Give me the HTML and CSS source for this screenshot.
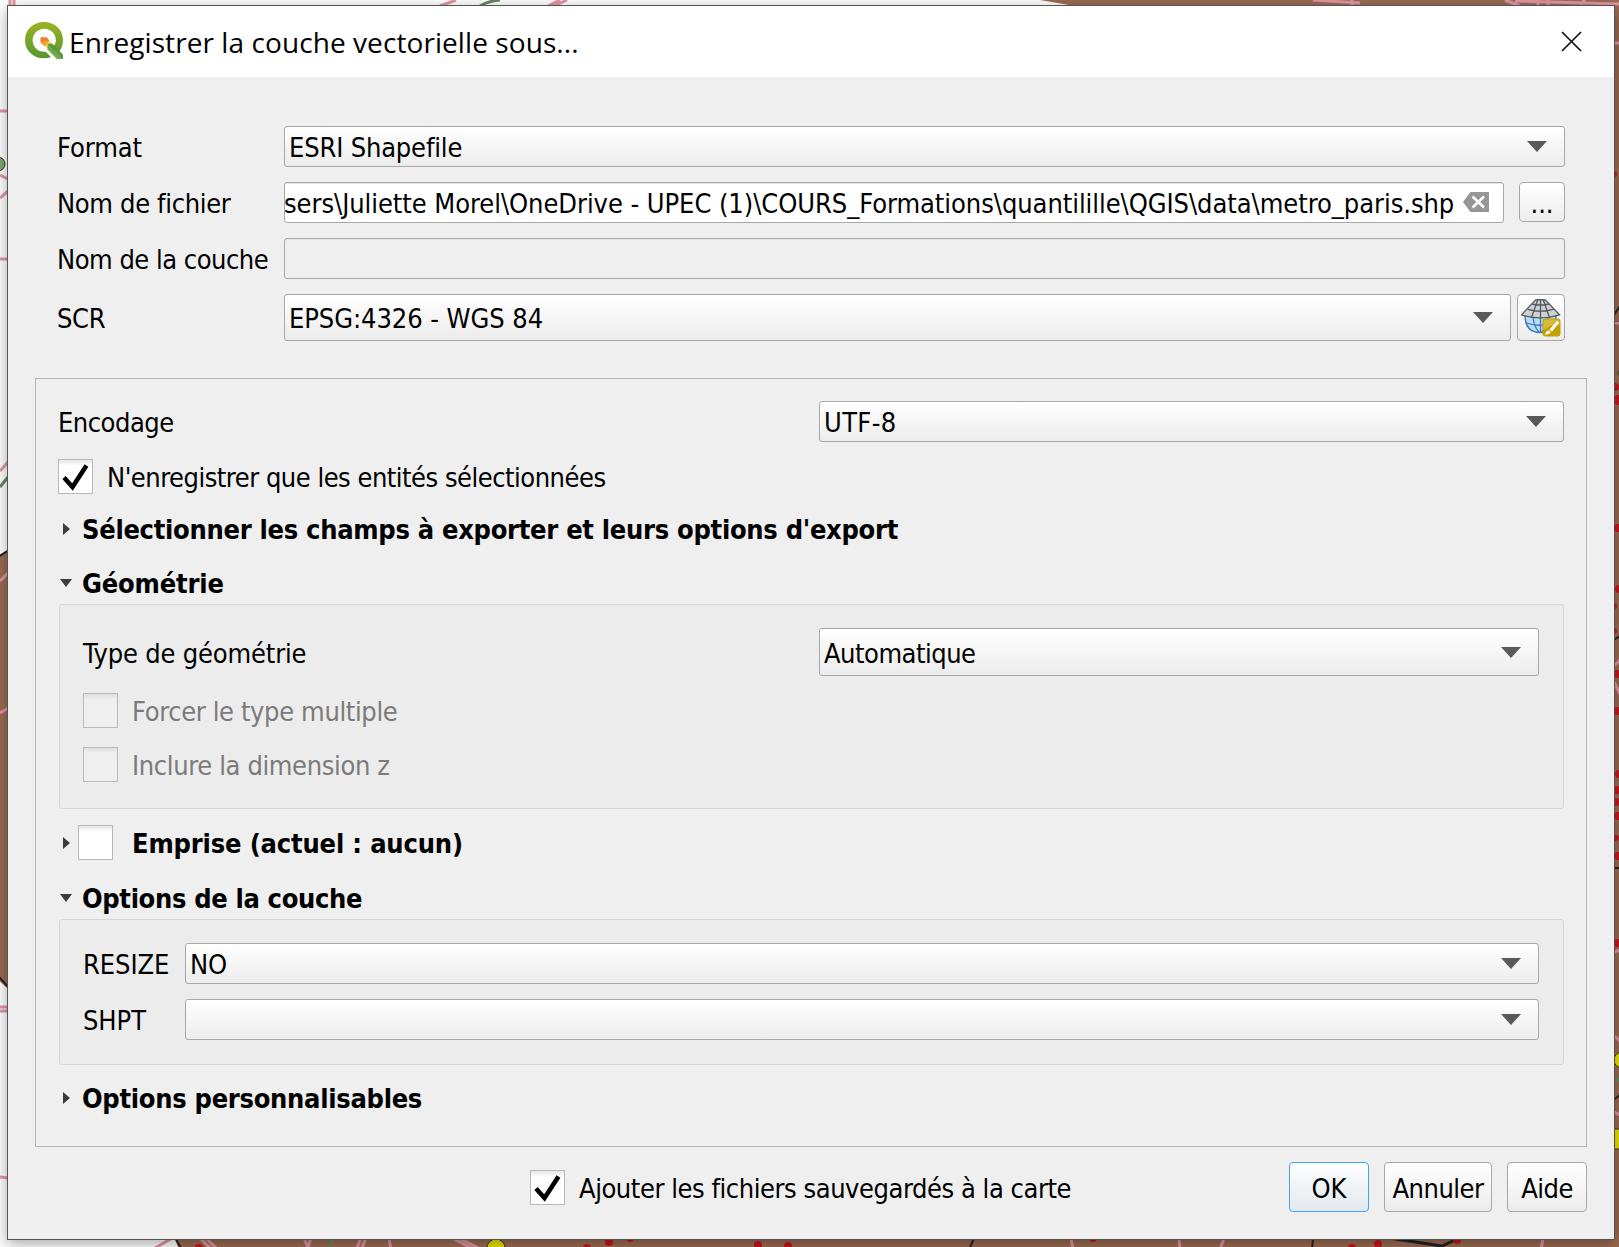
FILE: index.html
```html
<!DOCTYPE html>
<html lang="fr">
<head>
<meta charset="utf-8">
<title>Enregistrer la couche vectorielle sous...</title>
<link rel="stylesheet" href="styles.css">
</head>
<body>
<svg class="map" viewBox="0 0 1619 1247" aria-hidden="true">
  <path fill="#9c6b53" d="M1040 0 1030 8H1619V1247H178L174 1236 60 1030 7 988-6 976V558L8 551 500 500 1030 8 1040 0H1619V100Z"/>
  <g fill="none" stroke="#222" stroke-width="2">
    <path d="M-2 557 9 550M-1 977 9 988M174 1236 182 1250M974 1238 969 1250M1313 1238 1312 1250M1612 318 1620 306M1612 322H1620M1612 641 1620 636M1612 868H1620M1612 1101 1620 1095"/>
    <path stroke-width="3" d="M1389 1238 1442 1246 1457 1239"/>
  </g>
  <g fill="none" stroke="#e295a3" stroke-width="3">
    <path d="M10 0V6M14 0V6M0 111H8M0 175 8 179M0 198 8 191M0 259H8M0 471 8 462M0 581 8 573M0 713 8 708M0 1007H8M0 1011H8M0 1177 8 1178M440 6 456 0M548 6 560 0M554 6 567 0M1313 0 1360 3M1352 0V6M1505 0 1520 6M1515 1 1619 4M1538 0V6M1548 0V6M1580 5 1585 0M1612 43H1620M1612 323H1620M1612 668 1620 660M1612 678 1620 694M1612 953 1620 950M1612 1034 1620 1041M1612 1111 1620 1115M152 1250 172 1238M200 1238 212 1250M206 1238 218 1250M304 1238 309 1250M311 1238 307 1250M356 1250 361 1238M361 1250 366 1238M389 1238 391 1250M452 1238 475 1250M459 1238 482 1250M1071 1238 1073 1250M1179 1238 1180 1250M1220 1250 1224 1238M1541 1250 1543 1238"/>
  </g>
  <g fill="none" stroke="#64895f" stroke-width="3">
    <path d="M480 6Q488 1 500 0M0 487 8 477M328 1250 333 1238M1612 1074 1620 1081"/>
  </g>
  <circle cx="-2" cy="164" r="7" fill="#7cac68" stroke="#333"/>
  <g fill="#c8161d">
    <circle cx="199" cy="1248" r="4"/><circle cx="587" cy="1248" r="4"/><circle cx="609" cy="1242" r="4"/><circle cx="630" cy="1238" r="4"/><circle cx="758" cy="1245" r="4"/><circle cx="788" cy="1246" r="4"/><circle cx="1093" cy="1238" r="4"/><circle cx="1352" cy="1248" r="4"/><circle cx="1378" cy="1244" r="4"/><circle cx="1457" cy="1240" r="4"/>
    <circle cx="1614" cy="174" r="3"/><circle cx="1615" cy="387" r="4"/><circle cx="1618" cy="400" r="5"/><circle cx="1618" cy="528" r="4"/><circle cx="1619" cy="589" r="4"/><circle cx="1614" cy="606" r="3"/><circle cx="1614" cy="631" r="3"/><circle cx="1617" cy="674" r="4"/><circle cx="1617" cy="711" r="4"/><circle cx="1619" cy="774" r="4"/><circle cx="1617" cy="790" r="4"/><circle cx="1616" cy="802" r="4"/><circle cx="1618" cy="816" r="4"/><circle cx="1616" cy="838" r="3"/><circle cx="1618" cy="856" r="4"/><circle cx="1617" cy="943" r="4"/>
  </g>
  <g fill="#e9e500" stroke="#333">
    <circle cx="496" cy="1248" r="9"/><circle cx="1622" cy="1060" r="8"/><path d="M1612 1129H1624V1149H1612Z"/><circle cx="1621" cy="373" r="3"/>
  </g>
</svg>

<div class="dialog">
  <header class="titlebar">
    <svg class="logo" width="39" height="38" viewBox="0 0 39 38">
      <defs>
        <linearGradient id="ring" x1="0" y1="0" x2="0" y2="1"><stop offset="0" stop-color="#9ab423"/><stop offset="1" stop-color="#57962f"/></linearGradient>
      </defs>
      <path fill="url(#ring)" fill-rule="evenodd" d="M19 0C30 0 38 7.800 38 18.200 38 23 36.300 27 34 29.800L28.500 24.200C30 22.500 30.900 20.500 30.900 18.200 30.900 11.700 25.700 6.700 19.300 6.700 12.800 6.700 7.600 11.700 7.600 18.200 7.600 24.800 12.800 29.800 19.300 29.800L20.700 29.700 26 35C24 35.800 21.700 36.200 19 36.200 8 36.200 0 28.500 0 18.200 0 7.800 8 0 19 0Z"/>
      <path fill="#ee7f2d" d="M15.500 15.200H21.500L24.400 18.500 20 24.500 15.500 20.500Z"/>
      <path fill="#f2a13a" d="M15.500 20.500 21.500 18.500 24 19.500 20 24.300Z"/>
      <path fill="#f7e64b" d="M24 19.200 27.200 19.800 26.500 23 22.800 27 20 24.300Z"/>
      <path fill="#5a9a3c" d="M22.700 21.800H27.400L38 32.500V37H32L22.700 27.500Z"/>
      <path fill="#81b455" d="M22.700 27.500V22L37.800 37H32Z" opacity=".65"/>
    </svg>
    <h1 class="title">Enregistrer la couche vectorielle sous...</h1>
    <svg class="close" width="21" height="21" viewBox="0 0 21 21"><path d="M1 1 20 20M20 1 1 20" stroke="#111" stroke-width="1.700" fill="none"/></svg>
  </header>

  <section class="form">
    <div class="row">
      <span class="text label even">Format</span>
      <div class="combo grow"><span class="text snug">ESRI Shapefile</span><i class="arrow"></i></div>
    </div>
    <div class="row">
      <span class="text label">Nom de fichier</span>
      <div class="field grow path"><span class="text even">sers\Juliette Morel\OneDrive - UPEC (1)\COURS_Formations\quantilille\QGIS\data\metro_paris.shp</span>
        <svg class="clear" width="26" height="20" viewBox="0 0 26 20"><path fill="#969696" d="M0 10 7.500 0H26V20H7.500Z"/><path d="M9.500 4.500 21 15.500M21 4.500 9.500 15.500" stroke="#fff" stroke-width="2.600"/></svg>
      </div>
      <button class="button browse"><span class="text even">...</span></button>
    </div>
    <div class="row">
      <span class="text label tight">Nom de la couche</span>
      <div class="field disabled grow"></div>
    </div>
    <div class="row crs">
      <span class="text label">SCR</span>
      <div class="combo grow"><span class="text even">EPSG:4326 - WGS 84</span><i class="arrow"></i></div>
      <button class="button globe-button">
        <svg width="40" height="38" viewBox="0 0 40 38">
          <path d="M4 16Q4 33.500 19.500 33.500 35 33.500 35 16Z" fill="#b9dcf7" stroke="#3f76b5" stroke-width="1.500"/>
          <path d="M19.500 18V33M12 18Q13 28 18 33M27 18Q26 28 21 33M5.500 24Q19 28.500 33.500 24" stroke="#3f76b5" stroke-width="1.300" fill="none"/>
          <path d="M14.500 1Q19.500 0 24.500 1L38.500 15.800Q19.500 22 .5 15.800Z" fill="#cdd2d6" stroke="#55595d" stroke-width="1.300"/>
          <path d="M11 5Q19.500 7 28 5M6.500 10.300Q19.500 14 32.500 10.300M19.500 .5V20M16.800 .8 10.500 18.500M22.200 .8 28.500 18.500" stroke="#55595d" stroke-width="1.300" fill="none"/>
          <rect x="21.500" y="19.500" width="18" height="18" rx="3" fill="#c4a000"/>
          <path d="M22.500 23Q22.500 20.500 25 20.500H36Q38.500 20.500 38.500 23V26Q31 25 22.500 31Z" fill="#dcc04b" opacity=".8"/>
          <path d="M37 22 38 24 31 32.500 28.500 30.500 35.500 22.500ZM27.500 31.300 30 33.500Q27.500 35.500 24 35.700 24.500 32.500 27.500 31.300Z" fill="#fff"/>
        </svg>
      </button>
    </div>
  </section>

  <section class="options">
    <div class="split encoding">
      <span class="text tight">Encodage</span>
      <div class="combo"><span class="text wide">UTF-8</span><i class="arrow"></i></div>
    </div>
    <div class="check selected-only">
      <span class="box"><svg width="33" height="33" viewBox="0 0 33 33"><path d="M5 17.500 13.500 27 27.500 5.500" class="tick"/></svg></span>
      <span class="text tight">N'enregistrer que les entités sélectionnées</span>
    </div>
    <div class="heading fields"><i class="closed"></i><span class="text">Sélectionner les champs à exporter et leurs options d'export</span></div>
    <div class="heading geometry"><i class="open"></i><span class="text snug">Géométrie</span></div>
    <div class="panel geometry-panel">
      <div class="split">
        <span class="text snug">Type de géométrie</span>
        <div class="combo tall"><span class="text tight">Automatique</span><i class="arrow"></i></div>
      </div>
      <div class="check off"><span class="box"></span><span class="text">Forcer le type multiple</span></div>
      <div class="check off"><span class="box"></span><span class="text">Inclure la dimension z</span></div>
    </div>
    <div class="heading extent"><i class="closed"></i><span class="box"></span><span class="text snug">Emprise (actuel : aucun)</span></div>
    <div class="heading layer"><i class="open"></i><span class="text">Options de la couche</span></div>
    <div class="panel layer-panel">
      <div class="row"><span class="text name even">RESIZE</span><div class="combo grow"><span class="text even">NO</span><i class="arrow"></i></div></div>
      <div class="row"><span class="text name even">SHPT</span><div class="combo grow"><i class="arrow"></i></div></div>
    </div>
    <div class="heading custom"><i class="closed"></i><span class="text">Options personnalisables</span></div>
  </section>

  <footer class="footer">
    <div class="check add">
      <span class="box"><svg width="33" height="33" viewBox="0 0 33 33"><path d="M5 17.500 13.500 27 27.500 5.500" class="tick"/></svg></span>
      <span class="text">Ajouter les fichiers sauvegardés à la carte</span>
    </div>
    <button class="button default"><span class="text even">OK</span></button>
    <button class="button cancel"><span class="text tight">Annuler</span></button>
    <button class="button"><span class="text tight">Aide</span></button>
  </footer>
</div>
</body>
</html>
```
FILE: styles.css
```css
* { box-sizing: border-box; }

body {
  margin: 0;
  width: 1619px;
  height: 1247px;
  overflow: hidden;
  position: relative;
  background: #fff;
  color: #000;
  font: 27px/32px "DejaVu Sans Condensed", "DejaVu Sans", sans-serif;
  font-stretch: condensed;
}

.map { position: absolute; left: 0; top: 0; width: 1619px; height: 1247px; }

.dialog {
  position: relative;
  display: flex;
  flex-direction: column;
  width: 1608px;
  height: 1235px;
  margin: 5px 0 0 7px;
  border: 1px solid #555;
  background: #efefef;
  box-shadow: 0 4px 14px rgba(0, 0, 0, .35);
}

.titlebar {
  display: flex;
  align-items: center;
  height: 71px;
  padding: 0 32px 0 17px;
  background: #fff;
}
.logo { margin-top: -2px; flex: none; }
.title {
  flex: 1;
  margin: 1px 0 0 5px;
  font: 400 28px/38px "Open Sans", sans-serif;
  letter-spacing: .08px;
  white-space: nowrap;
}
.close { margin-top: -1px; }

/* text runs; the modifiers tune tracking */
.text { display: block; padding-top: 3px; white-space: pre; letter-spacing: -.34px; }
.tight { letter-spacing: -.5px; }
.snug { letter-spacing: -.17px; }
.even { letter-spacing: -.07px; }
.wide { letter-spacing: .35px; }

.form {
  display: flex;
  flex-direction: column;
  gap: 15px;
  padding: 49px 49px 0 49px;
}
.row { display: flex; align-items: center; height: 41px; }
.label { width: 227px; flex: none; }
.grow { flex: 1; min-width: 0; }
.crs { height: 47px; }

.combo, .field {
  display: flex;
  align-items: center;
  height: 41px;
  border: 1px solid #a8a8a8;
  border-radius: 3px;
}
.combo {
  justify-content: space-between;
  padding: 0 17px 0 4px;
  background: linear-gradient(#fff, #ececec);
}
.arrow {
  margin-left: auto;
  border: 10px solid transparent;
  border-top: 11px solid #5a5a5a;
  border-bottom: 0;
}
.field { background: #fff; box-shadow: inset 0 1px #e4e4e4; }
.disabled { background: #efefef; box-shadow: inset 0 1px #e2e2e2; }
.path { overflow: hidden; }
.path .text { margin-left: -1px; letter-spacing: -.06px; }
.clear { margin: -2px 14px 0 auto; flex: none; }
.crs .combo { height: 47px; }

.button {
  display: flex;
  align-items: center;
  justify-content: center;
  width: 80px;
  height: 50px;
  padding: 0;
  border: 1px solid #a8a8a8;
  border-radius: 4px;
  background: linear-gradient(#fff, #ececec);
  color: inherit;
  font: inherit;
  font-stretch: condensed;
}
.browse { width: 46px; height: 40px; margin: -1px 0 0 15px; }
.globe-button { width: 48px; height: 47px; margin-left: 6px; }
.default { border-color: #3ea6f5; background: linear-gradient(#fdfeff, #e3e9ee); }
.cancel { width: 108px; }

.options {
  display: flex;
  flex-direction: column;
  width: 1552px;
  height: 769px;
  margin: 37px 0 0 27px;
  padding: 22px 22px 0 23px;
  border: 1px solid #b4b4b4;
}
.split { display: flex; align-items: center; justify-content: space-between; }
.encoding { height: 41px; margin-left: -1px; }
.encoding .combo { width: 745px; }

.check { display: flex; align-items: center; gap: 14px; height: 35px; }
.selected-only { margin: 17px 0 0 -1px; }
.box {
  flex: none;
  width: 35px;
  height: 35px;
  border: 1px solid #b9b9b9;
  background: linear-gradient(#e6e6e6, #fff 6px);
}
.box svg { display: block; }
.tick { fill: none; stroke: #000; stroke-width: 4.6; }
.off { color: #7b7b7b; }
.off .text { letter-spacing: -.37px; }
.off .box { background: linear-gradient(#dedede, #efefef 5px); }
.add .text { letter-spacing: -.45px; }

.heading { display: flex; align-items: center; height: 35px; font-weight: 700; }
.heading i { flex: none; }
.closed { border: 6px solid transparent; border-left: 7px solid #3c3c3c; border-right: 0; }
.open { border: 6px solid transparent; border-top: 8px solid #3c3c3c; border-bottom: 0; }
.heading .closed { margin: 0 12px 0 4px; }
.heading .open { margin: 0 10px 0 1px; }
.fields { margin-top: 17px; }
.fields .text { letter-spacing: -.29px; }
.geometry { margin-top: 19px; }
.extent { margin-top: 16px; }
.extent .closed { margin-right: 8px; }
.extent .text { margin-left: 19px; }
.layer { margin-top: 20px; }
.custom { margin-top: 15px; }
.custom .text { letter-spacing: -.29px; }

.panel {
  border: 1px solid #d6d6d6;
  border-radius: 3px;
  background: #ececec;
}
.geometry-panel {
  display: flex;
  flex-direction: column;
  height: 205px;
  margin-top: 4px;
  padding: 23px 24px 0 23px;
}
.tall { width: 720px; height: 48px; }
.geometry-panel .check { margin-top: 17px; }
.geometry-panel .check + .check { margin-top: 19px; }
.layer-panel {
  display: flex;
  flex-direction: column;
  gap: 15px;
  height: 146px;
  margin-top: 4px;
  padding: 23px 24px 0 23px;
}
.name { width: 102px; }

.footer { display: flex; align-items: center; gap: 15px; height: 50px; margin: 15px 27px 0 522px; }
.add { margin-right: auto; }
```
